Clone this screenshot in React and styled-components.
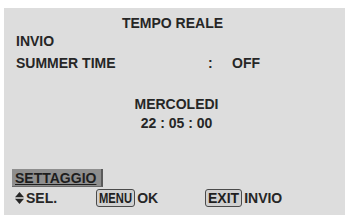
import styled, { createGlobalStyle } from "styled-components";

const GlobalStyle = createGlobalStyle`
  html, body {
    margin: 0;
    padding: 0;
    background: #ffffff;
  }
  body {
    font-family: "Liberation Sans", Arial, sans-serif;
  }
`;

const Screen = styled.div`
  width: 345px;
  height: 215px;
  padding: 8px 0 0 4px;
  box-sizing: border-box;
  overflow: hidden;
`;

const Panel = styled.div`
  height: 207px;
  background: #dddddd;
  color: #262626;
  font-size: 14px;
  font-weight: bold;
  line-height: 18px;
  padding: 6px 8px 0;
  box-sizing: border-box;
  display: flex;
  flex-direction: column;
`;

const Title = styled.div`
  text-align: center;
  padding-right: 4px;
`;

const Line = styled.div`
  display: flex;
  margin-left: 4px;
  margin-top: ${(p) => p.$gap || 0}px;
`;

const Label = styled.span`
  width: 192px;
`;

const Colon = styled.span`
  width: 24px;
`;

const Center = styled.div`
  text-align: center;
  margin-top: ${(p) => p.$gap || 0}px;
  padding-left: 4px;
`;

const Spacer = styled.div`
  flex: 1;
`;

const Selected = styled.div`
  align-self: flex-start;
  width: 91px;
  height: 18px;
  box-sizing: border-box;
  background: #8e8e8e;
  border-right: 2px solid #5a5a5a;
  border-bottom: 1px solid #6a6a6a;
  padding-left: 3px;
  line-height: 18px;
  text-decoration: underline;
  text-underline-offset: 1px;
  color: #1e1e1e;
`;

const Footer = styled.div`
  display: flex;
  align-items: center;
  height: 18px;
  margin: 2px 0 8px;
`;

const Hint = styled.div`
  display: flex;
  align-items: center;
  gap: 2px;
  width: ${(p) => (p.$w ? `${p.$w}px` : "auto")};
  padding-left: ${(p) => p.$pl || 0}px;
  box-sizing: border-box;
`;

const Key = styled.span`
  display: inline-block;
  height: 18px;
  line-height: 16px;
  box-sizing: border-box;
  padding: 0 ${(p) => p.$px || 2}px;
  border: 1.5px solid #4a4a4a;
  border-radius: 3px;
  background: #d0d0d0;
  font-size: ${(p) => p.$size || 14}px;
  letter-spacing: ${(p) => p.$ls || 0}px;
  color: #1e1e1e;
`;

const Narrow = styled.span`
  display: inline-block;
  transform: scaleX(0.8);
  transform-origin: left center;
  margin-right: -8px;
`;

function UpDown() {
  return (
    <svg width="9" height="12" viewBox="0 0 9 12">
      <path d="M4.5 0 L9 5.3 L0 5.3 Z" fill="#262626" />
      <path d="M0 6.7 L9 6.7 L4.5 12 Z" fill="#262626" />
    </svg>
  );
}

export default function App() {
  return (
    <>
      <GlobalStyle />
      <Screen>
        <Panel>
          <Title>TEMPO REALE</Title>
          <Line>INVIO</Line>
          <Line $gap={4}>
            <Label>SUMMER TIME</Label>
            <Colon>:</Colon>
            <span>OFF</span>
          </Line>
          <Center $gap={23}>MERCOLEDI</Center>
          <Center $gap={1}>22 : 05 : 00</Center>
          <Spacer />
          <Selected>SETTAGGIO</Selected>
          <Footer>
            <Hint $w={84} $pl={3}>
              <UpDown />
              <span>SEL.</span>
            </Hint>
            <Hint $w={109}>
              <Key $px={2}>
                <Narrow>MENU</Narrow>
              </Key>
              <span>OK</span>
            </Hint>
            <Hint>
              <Key>EXIT</Key>
              <span>INVIO</span>
            </Hint>
          </Footer>
        </Panel>
      </Screen>
    </>
  );
}
